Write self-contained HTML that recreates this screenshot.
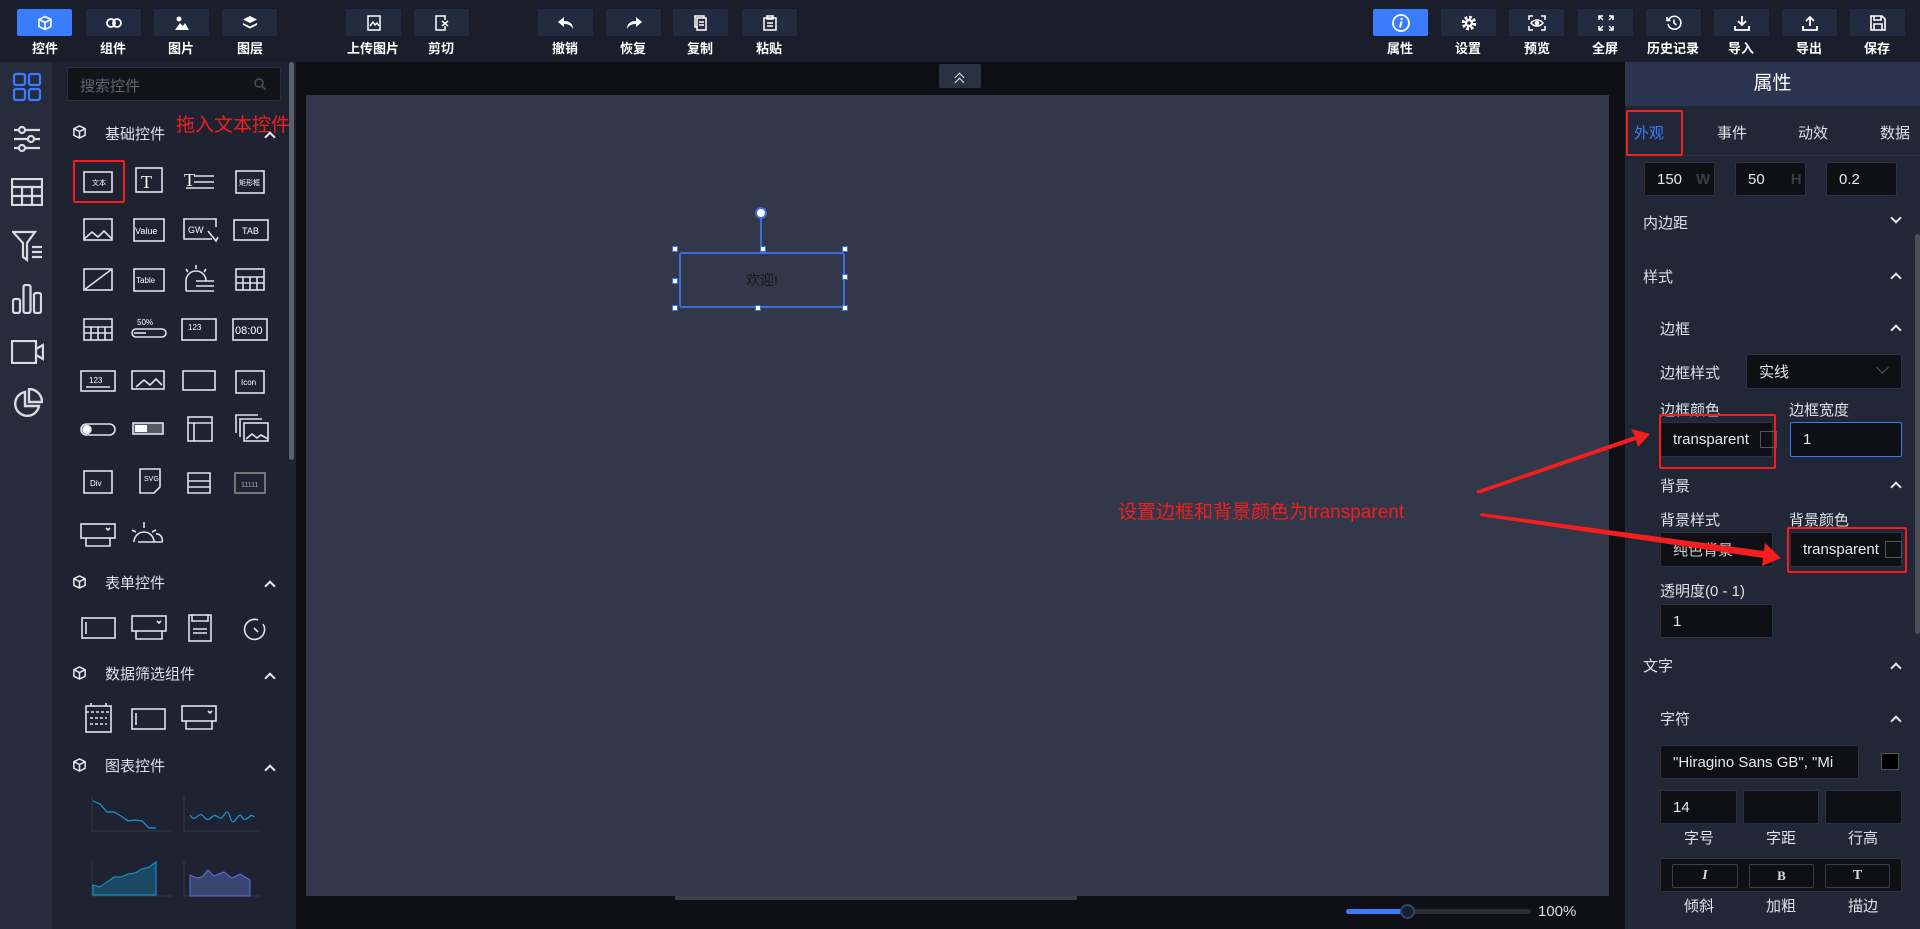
<!DOCTYPE html>
<html><head><meta charset="utf-8"><style>
*{margin:0;padding:0;box-sizing:border-box}
body{width:1920px;height:929px;overflow:hidden;background:#0f1016;font-family:"Liberation Sans","Noto Sans CJK SC",sans-serif;position:relative;color:#e6e8ee}
.a{position:absolute}
.top{left:0;top:0;width:1920px;height:62px;background:#1a1e2b}
.btn{position:absolute;top:9px;width:55px;height:27px;background:#222b40;border-radius:2px;display:flex;align-items:center;justify-content:center}
.btn.on{background:#3b7cff}
.lbl{position:absolute;top:38px;width:80px;text-align:center;font-size:13px;font-weight:bold;color:#fff}
.rail{left:0;top:62px;width:52px;height:867px;background:#262c3c}
.side{left:52px;top:62px;width:244px;height:867px;background:#1f2331}
.sec{position:absolute;left:0;font-size:15px;color:#e6e8ee}
.ico{position:absolute;width:40px;height:32px;display:flex;align-items:center;justify-content:center}
.rp{left:1625px;top:62px;width:295px;height:867px;background:#222738}
.in{position:absolute;background:#0e1016;border:1px solid #2c313c;border-radius:2px;color:#e8e8e8;font-size:15px;display:flex;align-items:center;padding-left:12px}
.t{position:absolute;font-size:15px;color:#dde0e6}
.chev{position:absolute;width:8px;height:8px;border-left:2px solid #e6e8ee;border-top:2px solid #e6e8ee;transform:rotate(45deg)}
.chevd{position:absolute;width:8px;height:8px;border-right:2px solid #e6e8ee;border-bottom:2px solid #e6e8ee;transform:rotate(45deg)}
.red{position:absolute;border:2px solid #f51e1e;border-radius:2px}
.h{position:absolute;width:6px;height:6px;background:#fff;border:1px solid #3a6ed8}
</style></head><body>
<div class="a top"></div>
<!-- toolbar buttons -->
<div class="btn on" style="left:17px"><svg width="16" height="16" viewBox="0 0 16 16" fill="none" stroke="#fff" stroke-width="1.6"><path d="M8 1.5 14 4.5v7L8 14.5 2 11.5v-7z M2 4.5 8 7.5l6-3 M8 7.5v7"/></svg></div><div class="lbl" style="left:5px">控件</div>
<div class="btn" style="left:86px"><svg width="16" height="10" viewBox="0 0 16 10" fill="none" stroke="#fff" stroke-width="1.8"><rect x="1" y="1" width="8" height="8" rx="4"/><rect x="7" y="1" width="8" height="8" rx="4"/></svg></div><div class="lbl" style="left:73px">组件</div>
<div class="btn" style="left:154px"><svg width="16" height="16" viewBox="0 0 16 16" fill="#fff"><circle cx="5" cy="4" r="2.5"/><path d="M1 15 6 8l3 3 2-3 4 7z"/></svg></div><div class="lbl" style="left:141px">图片</div>
<div class="btn" style="left:222px"><svg width="16" height="16" viewBox="0 0 16 16" fill="#fff"><path d="M8 1 15 4.5 8 8 1 4.5z M1 8l7 3.5L15 8v2l-7 3.5L1 10z"/></svg></div><div class="lbl" style="left:210px">图层</div>
<div class="btn" style="left:346px"><svg width="14" height="16" viewBox="0 0 14 16" fill="none" stroke="#fff" stroke-width="1.5"><rect x="1" y="1" width="12" height="14"/><path d="M3 11 6 7l2 3 2-2 2 3"/></svg></div><div class="lbl" style="left:333px">上传图片</div>
<div class="btn" style="left:414px"><svg width="14" height="16" viewBox="0 0 14 16" fill="none" stroke="#fff" stroke-width="1.5"><path d="M10 5V1H1v14h9v-4 M7 6l6 5 M7 11l6-5"/></svg></div><div class="lbl" style="left:401px">剪切</div>
<div class="btn" style="left:538px"><svg width="16" height="14" viewBox="0 0 16 14" fill="#fff"><path d="M6 1 0 6l6 5V8c4 0 7 1 9 5 0-5-3-8-9-8z"/></svg></div><div class="lbl" style="left:525px">撤销</div>
<div class="btn" style="left:606px"><svg width="16" height="14" viewBox="0 0 16 14" fill="#fff"><path d="M10 1l6 5-6 5V8c-4 0-7 1-9 5 0-5 3-8 9-8z"/></svg></div><div class="lbl" style="left:593px">恢复</div>
<div class="btn" style="left:673px"><svg width="14" height="16" viewBox="0 0 14 16" fill="none" stroke="#fff" stroke-width="1.5"><rect x="3" y="3" width="9" height="12"/><path d="M3 12H1V1h9v2 M5 7h5 M5 10h5"/></svg></div><div class="lbl" style="left:660px">复制</div>
<div class="btn" style="left:742px"><svg width="14" height="16" viewBox="0 0 14 16" fill="none" stroke="#fff" stroke-width="1.5"><rect x="1" y="3" width="12" height="12"/><rect x="4" y="1" width="6" height="3"/><path d="M4 8h6 M4 11h6"/></svg></div><div class="lbl" style="left:729px">粘贴</div>

<div class="btn on" style="left:1373px"><svg width="18" height="18" viewBox="0 0 18 18"><circle cx="9" cy="9" r="8" fill="none" stroke="#fff" stroke-width="1.8"/><circle cx="9.6" cy="5" r="1.2" fill="#fff"/><path d="M9.5 7.5 8 13.5" stroke="#fff" stroke-width="2"/></svg></div><div class="lbl" style="left:1360px">属性</div>
<div class="btn" style="left:1441px"><svg width="16" height="16" viewBox="0 0 16 16"><circle cx="8" cy="8" r="5.5" fill="none" stroke="#fff" stroke-width="3.5" stroke-dasharray="2.6 1.7"/><circle cx="8" cy="8" r="4" fill="#fff"/><circle cx="8" cy="8" r="1.8" fill="#222b40"/></svg></div><div class="lbl" style="left:1428px">设置</div>
<div class="btn" style="left:1509px"><svg width="18" height="16" viewBox="0 0 18 16" fill="none" stroke="#fff" stroke-width="1.5"><path d="M1 5V1h4 M13 1h4v4 M17 11v4h-4 M5 15H1v-4 M3 8c3-4 9-4 12 0-3 4-9 4-12 0z"/><circle cx="9" cy="8" r="1.5" fill="#fff"/></svg></div><div class="lbl" style="left:1497px">预览</div>
<div class="btn" style="left:1578px"><svg width="16" height="16" viewBox="0 0 16 16" fill="none" stroke="#fff" stroke-width="1.5"><path d="M1 5V1h4M1 1l4 4 M15 5V1h-4M15 1l-4 4 M1 11v4h4M1 15l4-4 M15 11v4h-4M15 15l-4-4"/></svg></div><div class="lbl" style="left:1565px">全屏</div>
<div class="btn" style="left:1646px"><svg width="16" height="16" viewBox="0 0 16 16" fill="none" stroke="#fff" stroke-width="1.6"><path d="M2.5 5A6.5 6.5 0 1 1 2 9 M1 2v3.5h3.5 M8 4.5V8l2.5 2"/></svg></div><div class="lbl" style="left:1633px">历史记录</div>
<div class="btn" style="left:1714px"><svg width="16" height="16" viewBox="0 0 16 16" fill="none" stroke="#fff" stroke-width="1.8"><path d="M8 1v9 M4 6l4 4 4-4 M1 11v4h14v-4"/></svg></div><div class="lbl" style="left:1701px">导入</div>
<div class="btn" style="left:1782px"><svg width="16" height="16" viewBox="0 0 16 16" fill="none" stroke="#fff" stroke-width="1.8"><path d="M8 11V2 M4 6l4-4 4 4 M1 11v4h14v-4"/></svg></div><div class="lbl" style="left:1769px">导出</div>
<div class="btn" style="left:1850px"><svg width="16" height="16" viewBox="0 0 16 16" fill="none" stroke="#fff" stroke-width="1.6"><path d="M1 1h11l3 3v11H1z M4 1v4h7V1 M4 15V9h8v6"/></svg></div><div class="lbl" style="left:1837px">保存</div>

<!-- left rail -->
<div class="a rail"></div>
<svg class="a" style="left:12px;top:72px" width="30" height="30" viewBox="0 0 30 30" fill="none" stroke="#3b7cff" stroke-width="2.2"><rect x="2" y="2" width="11" height="11" rx="2"/><rect x="17" y="2" width="11" height="11" rx="2"/><rect x="2" y="17" width="11" height="11" rx="2"/><rect x="17" y="17" width="11" height="11" rx="2"/></svg>
<svg class="a" style="left:12px;top:124px" width="30" height="30" viewBox="0 0 30 30" fill="none" stroke="#d8dbe2" stroke-width="2.2"><path d="M2 6h26 M2 15h26 M2 24h26"/><circle cx="10" cy="6" r="3" fill="#262c3c"/><circle cx="19" cy="15" r="3" fill="#262c3c"/><circle cx="10" cy="24" r="3" fill="#262c3c"/></svg>
<svg class="a" style="left:11px;top:178px" width="32" height="28" viewBox="0 0 32 28" fill="none" stroke="#d8dbe2" stroke-width="2.2"><rect x="1" y="1" width="30" height="26"/><path d="M1 9h30 M1 18h30 M11 9v18 M21 9v18"/></svg>
<svg class="a" style="left:12px;top:230px" width="32" height="32" viewBox="0 0 32 32" fill="none" stroke="#d8dbe2" stroke-width="2.2"><path d="M1 2h22l-8 11v17l-4-3V13z M20 17h10 M20 22h10 M20 27h10"/></svg>
<svg class="a" style="left:12px;top:284px" width="30" height="30" viewBox="0 0 30 30" fill="none" stroke="#d8dbe2" stroke-width="2.2"><rect x="1" y="15" width="7" height="14" rx="2"/><rect x="11.5" y="1" width="7" height="28" rx="2"/><rect x="22" y="9" width="7" height="20" rx="2"/></svg>
<svg class="a" style="left:11px;top:340px" width="33" height="24" viewBox="0 0 33 24" fill="none" stroke="#d8dbe2" stroke-width="2.2"><rect x="1" y="1" width="24" height="22"/><path d="M25 9l7-4v14l-7-4"/></svg>
<svg class="a" style="left:12px;top:388px" width="31" height="31" viewBox="0 0 31 31" fill="none" stroke="#d8dbe2" stroke-width="2.4"><path d="M13 4A12 12 0 1 0 27 18H13z M17 1v13h13A13 13 0 0 0 17 1z"/></svg>

<!-- side panel -->
<div class="a side"></div>
<div class="a" style="left:289px;top:62px;width:5px;height:398px;background:#5a5f6a;border-radius:3px"></div>
<div class="a" style="left:67px;top:67px;width:214px;height:34px;background:#121419;border:1px solid #2b2f39;border-radius:2px"></div>
<div class="t" style="left:80px;top:75px;color:#5f6470;font-size:15px">搜索控件</div>
<svg class="a" style="left:254px;top:78px" width="12" height="12" fill="none" stroke="#4a4f59" stroke-width="1.5"><circle cx="5" cy="5" r="4"/><path d="M8 8l3.5 3.5"/></svg>
<div class="a" style="left:176px;top:110px;color:#f01e1e;font-size:19px">拖入文本控件</div>

<div id="sections"></div>
<svg class="a" style="left:72px;top:124px" width="15" height="16" viewBox="0 0 16 16" fill="none" stroke="#e6e8ee" stroke-width="1.6"><path d="M8 1.5 14 4.5v7L8 14.5 2 11.5v-7z M2 4.5 8 7.5l6-3 M8 7.5v7"/></svg>
<div class="t" style="left:105px;top:123px">基础控件</div><div class="chev" style="left:266px;top:133px"></div>

<!-- grid icons -->
<svg class="a" style="left:70px;top:160px" width="220" height="400" viewBox="0 0 220 400" fill="none" stroke="#dfe2e8" stroke-width="1.6" font-family="Liberation Sans" font-size="9">
<g transform="translate(0,0)">
<rect x="14" y="12" width="28" height="20"/><text x="22" y="25" fill="#fff" stroke="none" font-size="7">文本</text>
<rect x="66" y="8" width="26" height="24"/><text x="71" y="28" fill="#fff" stroke="none" font-size="18" font-family="Liberation Serif">T</text>
<text x="114" y="26" fill="#fff" stroke="none" font-size="18" font-family="Liberation Serif">T</text><path d="M124 16h20 M124 22h20 M116 28h28"/>
<rect x="166" y="11" width="28" height="22"/><text x="169" y="25" fill="#fff" stroke="none" font-size="7">矩形框</text>
</g>
<g transform="translate(0,51)">
<rect x="14" y="8" width="28" height="21"/><path d="M14 28l8-7 6 5 6-6 8 8"/>
<rect x="64" y="8" width="30" height="22"/><text x="65" y="23" fill="#fff" stroke="none" font-size="9">Value</text>
<path d="M142 28h-28V8h32v8"/><text x="118" y="22" fill="#fff" stroke="none" font-size="9">GW</text><path d="M138 20l8 10 2-4"/>
<rect x="164" y="9" width="34" height="20"/><text x="172" y="23" fill="#fff" stroke="none" font-size="9">TAB</text>
</g>
<g transform="translate(0,101)">
<rect x="14" y="8" width="28" height="21"/><path d="M14 29 42 8"/>
<rect x="64" y="8" width="30" height="22"/><text x="66" y="22" fill="#fff" stroke="none" font-size="8">Table</text>
<path d="M116 30v-10a10 10 0 0 1 20 0 M126 4v4 M116 8l2 3 M136 8l-2 3 M126 20h18 M126 25h18 M116 30h28"/>
<rect x="166" y="8" width="28" height="21"/><path d="M166 16h28 M166 22h28 M173 16v13 M180 16v13 M187 16v13"/>
</g>
<g transform="translate(0,151)">
<rect x="14" y="8" width="28" height="21"/><path d="M14 16h28 M14 22h28 M21 16v13 M28 16v13 M35 16v13"/>
<text x="67" y="14" fill="#fff" stroke="none" font-size="8">50%</text><rect x="62" y="18" width="34" height="8" rx="4"/><path d="M64 22h12"/>
<rect x="112" y="8" width="34" height="21"/><text x="118" y="19" fill="#fff" stroke="none" font-size="8">123</text>
<rect x="163" y="8" width="34" height="21"/><text x="165" y="23" fill="#fff" stroke="none" font-size="11">08:00</text>
</g>
<g transform="translate(0,201)">
<rect x="11" y="10" width="34" height="20"/><text x="19" y="22" fill="#fff" stroke="none" font-size="8">123</text><path d="M16 26h24"/>
<rect x="62" y="10" width="32" height="18"/><path d="M66 26l8-7 6 5 6-6 6 6"/>
<rect x="113" y="10" width="32" height="19"/>
<rect x="166" y="10" width="28" height="22"/><text x="171" y="24" fill="#fff" stroke="none" font-size="8">Icon</text>
</g>
<g transform="translate(0,251)">
<rect x="11" y="13" width="34" height="11" rx="5.5"/><circle cx="17" cy="18.5" r="4" fill="#fff"/>
<rect x="63" y="12" width="30" height="11" fill="#555a66"/><rect x="65" y="14" width="12" height="7" fill="#fff" stroke="none"/>
<rect x="118" y="6" width="24" height="24"/><path d="M118 12h24 M124 12v18"/>
<rect x="174" y="12" width="24" height="18"/><path d="M170 26V8h22 M166 22V4h22 M176 28l6-5 5 4 4-3 7 4"/>
</g>
<g transform="translate(0,301)">
<rect x="14" y="10" width="28" height="22"/><text x="20" y="25" fill="#fff" stroke="none" font-size="8">Div</text>
<path d="M70 8h20v18l-6 6H70z"/><text x="74" y="20" fill="#fff" stroke="none" font-size="7">SVG</text>
<path d="M118 12h22v20h-22z M118 20h22 M118 26h22"/>
<rect x="165" y="12" width="30" height="20" stroke="#888"/><text x="171" y="26" fill="#aaa" stroke="none" font-size="7">11111</text>
</g>
<g transform="translate(0,352)">
<rect x="11" y="12" width="34" height="14"/><path d="M16 26v8h24v-8 M36 16l2 2 2-2"/>
<path d="M64 30a10 10 0 0 1 20 0 M74 10v6 M62 18l4 2 M86 18l-4 2 M68 30h24a6 6 0 0 0-6-8"/>
</g>
</svg>
<div class="red" style="left:73px;top:160px;width:52px;height:43px"></div>

<svg class="a" style="left:72px;top:574px" width="15" height="16" viewBox="0 0 16 16" fill="none" stroke="#e6e8ee" stroke-width="1.6"><path d="M8 1.5 14 4.5v7L8 14.5 2 11.5v-7z M2 4.5 8 7.5l6-3 M8 7.5v7"/></svg>
<div class="t" style="left:105px;top:572px">表单控件</div><div class="chev" style="left:266px;top:582px"></div>
<svg class="a" style="left:70px;top:608px" width="220" height="40" fill="none" stroke="#dfe2e8" stroke-width="1.6"><rect x="12" y="10" width="33" height="20"/><path d="M16 14v12"/><rect x="62" y="8" width="34" height="15"/><path d="M66 23v8h26v-8 M87 13l2 2 2-2"/><rect x="119" y="7" width="22" height="26"/><path d="M122 7v6h16V7 M123 21h14 M123 25h14"/><path d="M188 12a10 10 0 1 0 5 4 M184 20l4 4"/></svg>
<svg class="a" style="left:72px;top:665px" width="15" height="16" viewBox="0 0 16 16" fill="none" stroke="#e6e8ee" stroke-width="1.6"><path d="M8 1.5 14 4.5v7L8 14.5 2 11.5v-7z M2 4.5 8 7.5l6-3 M8 7.5v7"/></svg>
<div class="t" style="left:105px;top:663px">数据筛选组件</div><div class="chev" style="left:266px;top:674px"></div>
<svg class="a" style="left:70px;top:700px" width="160" height="40" fill="none" stroke="#dfe2e8" stroke-width="1.6"><rect x="16" y="6" width="25" height="26"/><path d="M16 12h25 M21 3v5 M36 3v5 M20 18h17 M20 24h17" stroke-dasharray="3 2"/><rect x="62" y="9" width="33" height="20"/><path d="M66 13v12"/><rect x="112" y="6" width="34" height="15"/><path d="M116 21v8h26v-8 M138 11l2 2 2-2"/></svg>
<svg class="a" style="left:72px;top:757px" width="15" height="16" viewBox="0 0 16 16" fill="none" stroke="#e6e8ee" stroke-width="1.6"><path d="M8 1.5 14 4.5v7L8 14.5 2 11.5v-7z M2 4.5 8 7.5l6-3 M8 7.5v7"/></svg>
<div class="t" style="left:105px;top:755px">图表控件</div><div class="chev" style="left:266px;top:766px"></div>
<svg class="a" style="left:80px;top:795px" width="180" height="134" fill="none">
<path d="M12 1v35h80 M104 1v35h80" stroke="#3a3f4c" stroke-width=".8"/>
<path d="M13 6l7 3 7 8 7 0 7 4 7 5 7-1 7 1 7 7 7 0" stroke="#1a9ad6" stroke-width="1.2"/>
<path d="M110 20c6 10 8-6 14 2s8-6 14 0 8-14 12 0 8-8 12 0 8-6 12 0" stroke="#1a9ad6" stroke-width="1.2"/>
<path d="M12 66v35h80 M104 66v35h80" stroke="#3a3f4c" stroke-width=".8"/>
<path d="M13 90l7 2 7-5 7-5 7 0 7-3 7-1 7-4 7-2 7-5v33H13z" fill="#1a4a63" stroke="#1a9ad6"/>
<path d="M110 80l6 3 6-1 6-7 6 6 10-4 8 6 8-4 10 6v16h-60z" fill="#3a4470" stroke="#5d6fd6"/>
</svg>

<!-- canvas -->
<div class="a" style="left:306px;top:95px;width:1303px;height:801px;background:#323849"></div>
<div class="a" style="left:939px;top:64px;width:42px;height:24px;background:#2a3142;border-radius:2px"></div>
<div class="chev" style="left:956px;top:74px;width:7px;height:7px;border-width:1.5px"></div><div class="chev" style="left:956px;top:79px;width:7px;height:7px;border-width:1.5px"></div>
<div class="a" style="left:675px;top:896px;width:402px;height:4px;background:#3b404c"></div>
<div class="a" style="left:1346px;top:909px;width:185px;height:5px;background:#2a2d35;border-radius:3px"></div>
<div class="a" style="left:1346px;top:909px;width:61px;height:5px;background:#3b7cff;border-radius:3px"></div>
<div class="a" style="left:1400px;top:904px;width:15px;height:15px;background:#1a1f2c;border:2px solid #2d4670;border-radius:50%"></div>
<div class="a" style="left:1538px;top:903px;font-size:15px;color:#dcdee3">100%</div>

<!-- selected element -->
<div class="a" style="left:679px;top:252px;width:166px;height:56px;border:2px solid #3a6ed8;border-radius:3px;display:flex;align-items:center;justify-content:center;color:#1a1a1a;font-size:14px">欢迎!</div>
<div class="a" style="left:760px;top:218px;width:2px;height:34px;background:#3a6ed8"></div>
<div class="a" style="left:755px;top:207px;width:12px;height:12px;background:#fff;border:2px solid #3a6ed8;border-radius:50%"></div>
<div class="h" style="left:672px;top:246px"></div><div class="h" style="left:760px;top:246px"></div><div class="h" style="left:842px;top:246px"></div>
<div class="h" style="left:672px;top:278px"></div><div class="h" style="left:842px;top:274px"></div>
<div class="h" style="left:672px;top:305px"></div><div class="h" style="left:755px;top:305px"></div><div class="h" style="left:842px;top:305px"></div>

<!-- right panel -->
<div class="a rp"></div>
<div class="a" style="left:1625px;top:62px;width:295px;height:44px;background:#2b3450;text-align:center;font-size:19px;line-height:44px;color:#fff">属性</div>
<div class="a" style="left:1625px;top:155px;width:295px;height:1px;background:#2f3546"></div>
<div class="t" style="left:1634px;top:122px;color:#3b7cff">外观</div>
<div class="t" style="left:1717px;top:122px">事件</div>
<div class="t" style="left:1798px;top:122px">动效</div>
<div class="t" style="left:1880px;top:122px">数据</div>
<div class="red" style="left:1626px;top:110px;width:57px;height:46px"></div>
<div class="in" style="left:1644px;top:162px;width:71px;height:34px">150<span style="margin-left:14px;color:#3a3d45;font-weight:bold">W</span></div>
<div class="in" style="left:1735px;top:162px;width:71px;height:34px">50<span style="margin-left:26px;color:#3a3d45;font-weight:bold">H</span></div>
<div class="in" style="left:1826px;top:162px;width:71px;height:34px">0.2</div>
<div class="a" style="left:1915px;top:234px;width:5px;height:400px;background:#4a4f5a;border-radius:3px"></div>

<div class="t" style="left:1643px;top:212px">内边距</div><div class="chevd" style="left:1892px;top:214px"></div>
<div class="t" style="left:1643px;top:266px">样式</div><div class="chev" style="left:1892px;top:274px"></div>
<div class="t" style="left:1660px;top:318px">边框</div><div class="chev" style="left:1892px;top:326px"></div>
<div class="t" style="left:1660px;top:362px">边框样式</div>
<div class="in" style="left:1746px;top:354px;width:156px;height:35px">实线<span style="position:absolute;right:14px;top:8px;width:9px;height:9px;border-right:1px solid #555;border-bottom:1px solid #555;transform:rotate(45deg)"></span></div>
<div class="t" style="left:1660px;top:399px">边框颜色</div>
<div class="t" style="left:1789px;top:399px">边框宽度</div>
<div class="in" style="left:1660px;top:422px;width:113px;height:35px">transparent<span style="position:absolute;left:99px;top:8px;width:17px;height:17px;border:1px solid #555"></span></div>
<div class="red" style="left:1659px;top:414px;width:117px;height:55px"></div>
<div class="in" style="left:1790px;top:422px;width:112px;height:35px;border-color:#3b7cff">1</div>
<div class="t" style="left:1660px;top:475px">背景</div><div class="chev" style="left:1892px;top:483px"></div>
<div class="t" style="left:1660px;top:509px">背景样式</div>
<div class="t" style="left:1789px;top:509px">背景颜色</div>
<div class="in" style="left:1660px;top:532px;width:113px;height:35px;color:#ccc">纯色背景</div>
<div class="in" style="left:1790px;top:532px;width:112px;height:35px">transparent<span style="position:absolute;left:94px;top:8px;width:17px;height:17px;border:1px solid #555"></span></div>
<div class="red" style="left:1787px;top:527px;width:120px;height:46px"></div>
<div class="t" style="left:1660px;top:580px">透明度(0 - 1)</div>
<div class="in" style="left:1660px;top:604px;width:113px;height:34px">1</div>
<div class="t" style="left:1643px;top:655px">文字</div><div class="chev" style="left:1892px;top:664px"></div>
<div class="t" style="left:1660px;top:708px">字符</div><div class="chev" style="left:1892px;top:717px"></div>
<div class="in" style="left:1660px;top:745px;width:199px;height:34px;overflow:hidden;white-space:nowrap">"Hiragino Sans GB", "Mi</div>
<div class="a" style="left:1881px;top:753px;width:18px;height:17px;background:#000;border:1px solid #555"></div>
<div class="in" style="left:1660px;top:790px;width:77px;height:34px">14</div>
<div class="in" style="left:1743px;top:790px;width:76px;height:34px"></div>
<div class="in" style="left:1825px;top:790px;width:77px;height:34px"></div>
<div class="t" style="left:1684px;top:827px">字号</div><div class="t" style="left:1766px;top:827px">字距</div><div class="t" style="left:1848px;top:827px">行高</div>
<div class="in" style="left:1660px;top:858px;width:242px;height:34px"></div>
<div class="a" style="left:1672px;top:864px;width:66px;height:24px;border:1px solid #3a3e48;border-radius:2px;text-align:center;font:italic bold 14px 'Liberation Serif';line-height:22px;color:#ddd">I</div>
<div class="a" style="left:1749px;top:864px;width:65px;height:24px;border:1px solid #3a3e48;border-radius:2px;text-align:center;font:bold 13px 'Liberation Serif';line-height:22px;color:#ddd">B</div>
<div class="a" style="left:1825px;top:864px;width:65px;height:24px;border:1px solid #3a3e48;border-radius:2px;text-align:center;font:bold 14px 'Liberation Serif';line-height:22px;color:#ddd">T</div>
<div class="t" style="left:1684px;top:895px">倾斜</div><div class="t" style="left:1766px;top:895px">加粗</div><div class="t" style="left:1848px;top:895px">描边</div>

<!-- annotations -->
<div class="a" style="left:1118px;top:497px;color:#f01e1e;font-size:19px;white-space:nowrap">设置边框和背景颜色为transparent</div>
<svg class="a" style="left:0;top:0" width="1920" height="929" fill="#f51e1e" stroke="none">
<path d="M1476 491 1635 436 1631 429 1650 434 1638 447 1636 440 1478 494z"/>
<path d="M1481 513 1764 551 1765 543 1781 558 1762 566 1763 558 1480 516z"/>
</svg>
</body></html>
